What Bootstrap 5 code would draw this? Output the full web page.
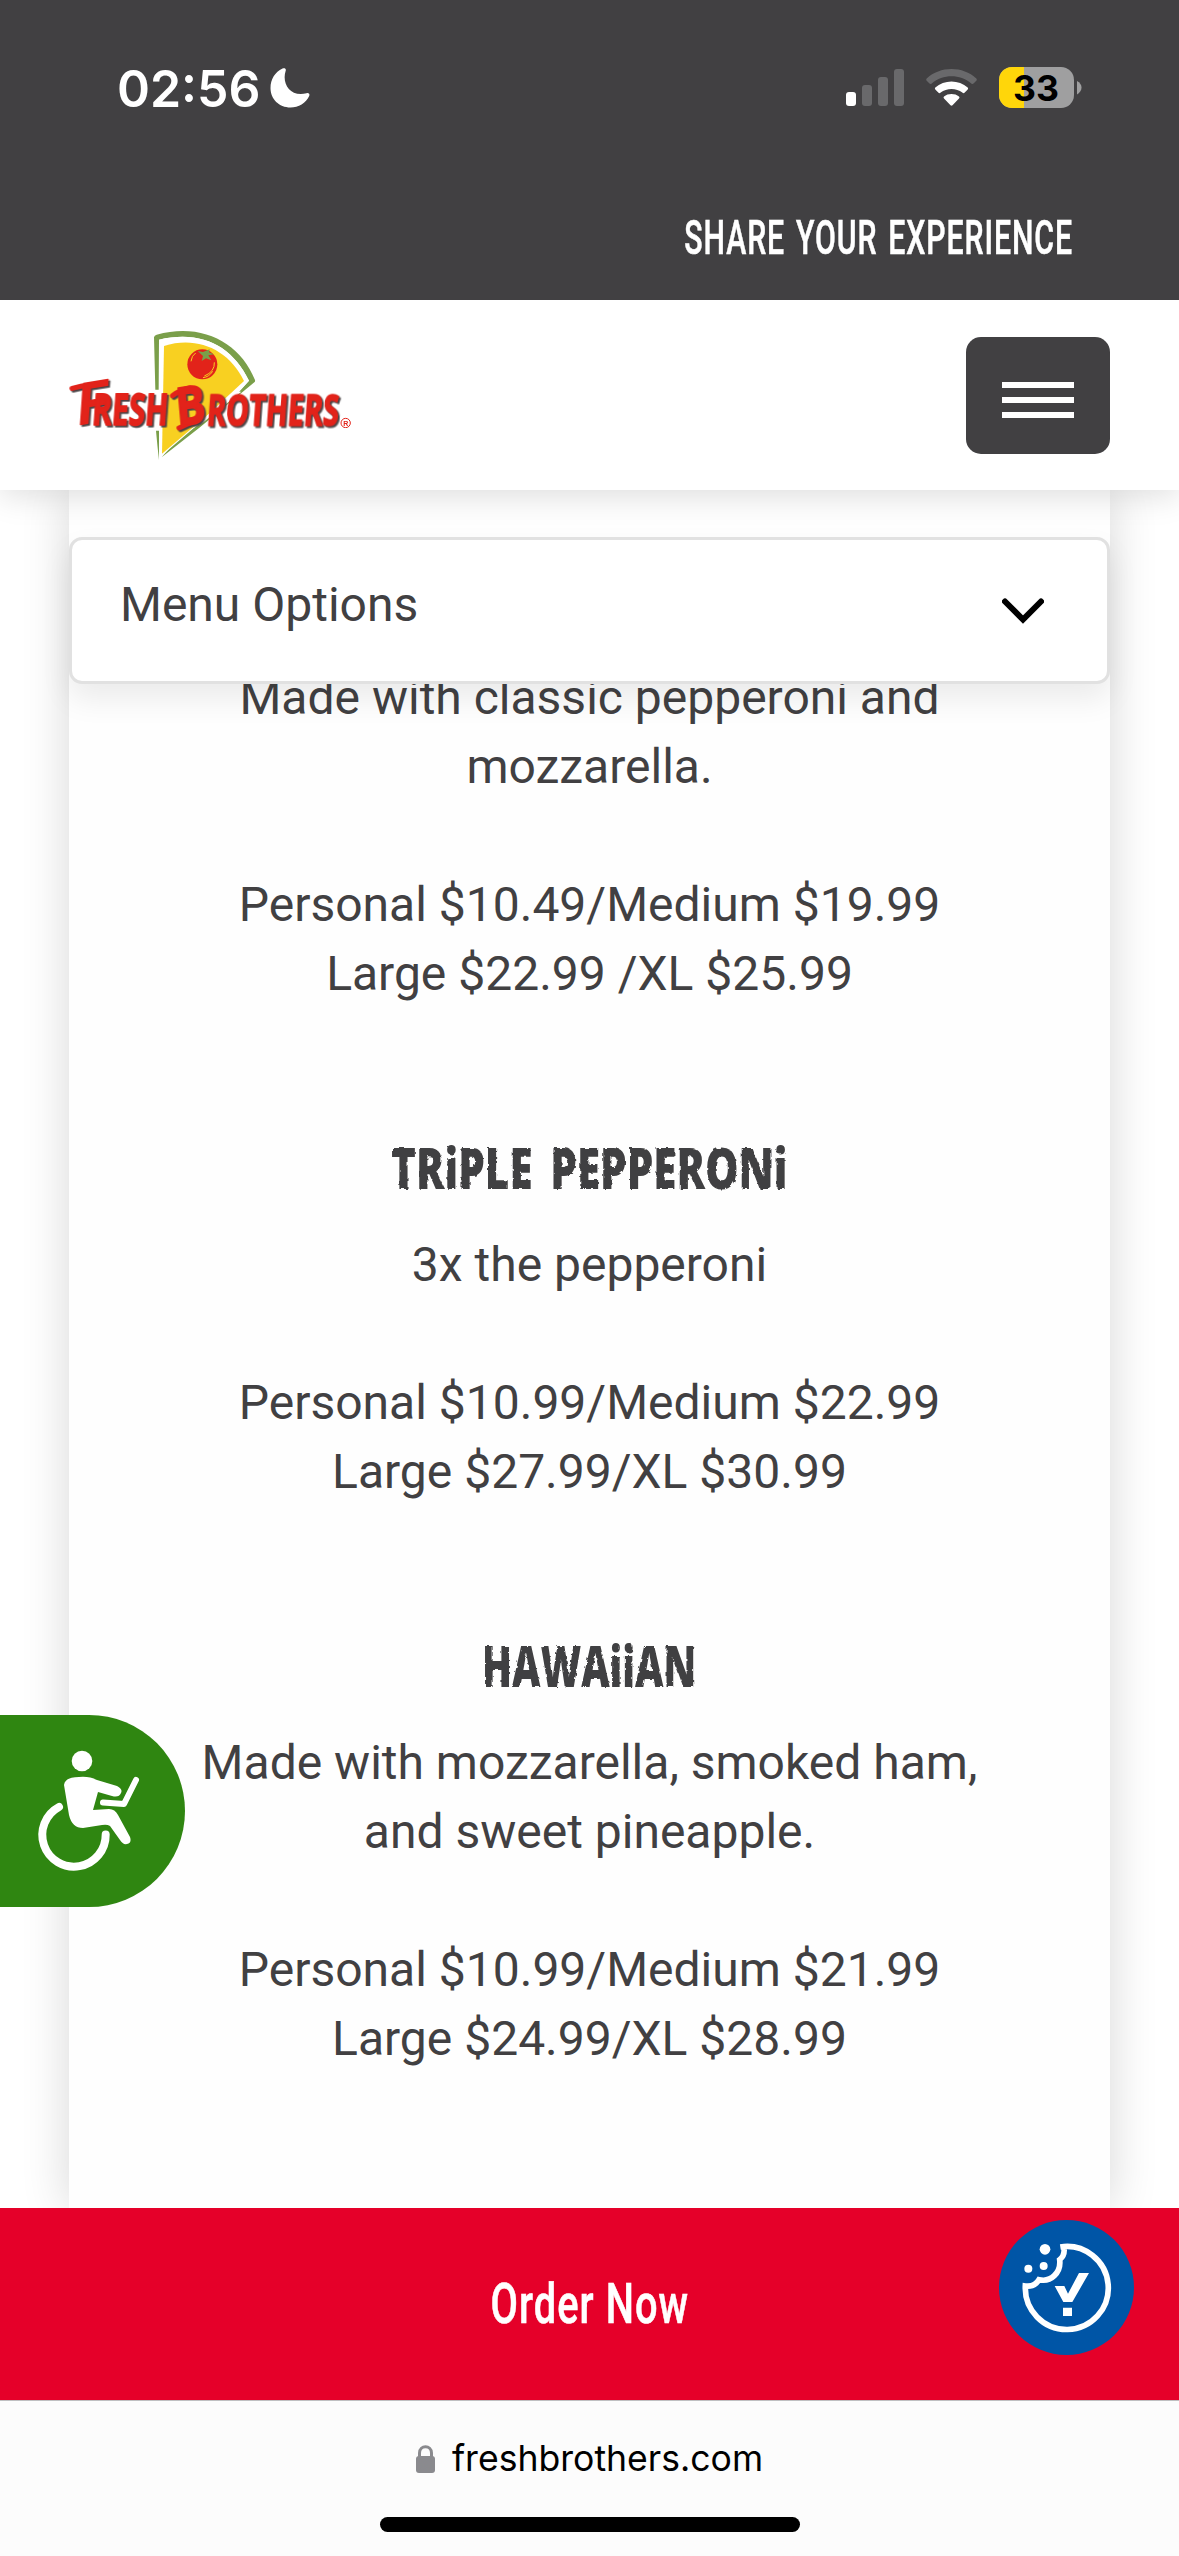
<!DOCTYPE html>
<html lang="en">
<head>
<meta charset="utf-8">
<meta name="viewport" content="width=device-width, initial-scale=1">
<title>Fresh Brothers</title>
<link href="https://cdn.jsdelivr.net/npm/bootstrap@5.3.0/dist/css/bootstrap.min.css" rel="stylesheet">
<style>
  :root { --ink: #414042; }
  body { font-family: Roboto, sans-serif; color: var(--ink); background: #fff; font-size: 48px; line-height: 69px; letter-spacing: 0; }
  svg { display: block; flex: none; }
  .screen { height: 2556px; }
  .topbar { height: 300px; background: var(--ink); z-index: 4; }
  .statusbar { height: 176px; padding: 0 97px 0 117px; }
  .clock { font: 600 51px/1 Inter, sans-serif; transform: scaleX(.98); transform-origin: 0 50%; }
  .promo { padding-right: 106px; height: 122px; }
  .slim { display: inline-block; white-space: nowrap; font-weight: 500; letter-spacing: 1.500px; -webkit-text-stroke: .6px #fff; }
  .slim-promo { font-size: 49px; transform: scaleX(.617); transform-origin: 100% 50%; word-spacing: 4px; }
  .slim-order { font-size: 56px; transform: scaleX(.71); }
  .sitebar { height: 190px; padding: 0 69px; z-index: 3; box-shadow: 0 6px 30px rgba(0,0,0,.13); }
  .burger { width: 144px; height: 117px; border-radius: 15px; background: var(--ink); gap: 9px; padding-top: 9px; margin-top: 1px; }
  .burger span { width: 72px; height: 6px; background: #fff; }
  .stage { padding: 0 69px; z-index: 1; }
  .sheet { background: #fefefe; box-shadow: 0 0 45px rgba(0,0,0,.16); padding: 173px 0 0; }
  .picker { top: 47px; left: 69px; right: 69px; height: 147px; border: 3px solid #e1e1e1; border-radius: 13px; box-shadow: 0 15px 30px rgba(0,0,0,.08); padding: 0 63px 12px 48px; z-index: 2; }
  .dish { margin-bottom: 124px; }
  .dish h3 { font: 800 56px/70px "Open Sans", sans-serif; margin: 0 0 28px; height: 70px; filter: url(#rough); color: var(--ink); word-spacing: 9px; }
  .dish h3 span { display: inline-block; transform: scaleX(.753); }
  .dish h3 .tight { transform: scaleX(.7); }
  .dish p { margin: 0 0 69px; }
  .dish p + p { margin: 0; }
  .orderbar { height: 192px; background: #e50029; z-index: 4; }
  .cookie { width: 135px; height: 135px; right: 45px; top: 12px; }
  .a11y { left: 0; top: 1715px; width: 185px; height: 192px; background: #2f8611; border-radius: 0 96px 96px 0; z-index: 5; }
  .urlbar { height: 156px; background: #fcfcfc; border-top: 1px solid #bfbfc1; z-index: 4; color: #000; padding-top: 31px; }
  .host { font: 400 35.600px/54px Inter, sans-serif; }
  .homebar { width: 420px; height: 15px; border-radius: 8px; background: #000; margin-top: 31px; }
  .wordmark { filter: drop-shadow(5px 5px 0 #4a4446); }
</style>
<script src="https://cdn.jsdelivr.net/npm/bootstrap@5.3.0/dist/js/bootstrap.bundle.min.js"></script>
</head>
<body>
<svg width="0" height="0" class="position-absolute" aria-hidden="true">
  <filter id="rough" x="0" y="0" width="1" height="1"><feTurbulence type="fractalNoise" baseFrequency=".2" numOctaves="2" seed="4"/><feDisplacementMap in="SourceGraphic" scale="3"/></filter>
</svg>
<div class="screen d-flex flex-column position-relative overflow-hidden">
  <header class="topbar flex-shrink-0 text-white position-relative">
    <div class="statusbar d-flex align-items-center justify-content-between">
      <div class="d-flex align-items-center">
        <span class="clock">02:56</span>
        <svg style="margin-left:7px" width="40" height="40" viewBox="0 0 40 40"><path fill="#fff" d="M12.500 .6C14.500-.4 16.400 .6 15.700 2.800C11.500 15 20 29.500 36.500 25.200C38.700 24.600 40 26 39.200 28C36 35 28.500 39.500 20.500 39.500C9 39.500 .5 31 .5 20C.5 11.500 5 4 12.500 .6Z"/></svg>
      </div>
      <svg width="236" height="42" viewBox="0 0 236 42">
        <rect x="0" y="25" width="10" height="14" rx="3" fill="#fff"/>
        <g fill="#69696b"><rect x="16" y="18" width="10" height="21" rx="3"/><rect x="32" y="10" width="10" height="29" rx="3"/><rect x="48" y="2" width="10" height="37" rx="3"/></g>
        <g transform="translate(80 2)">
          <path fill="#69696b" d="M.7 9.500C14-3.200 37-3.200 50.300 9.500Q51.300 10.700 50.300 11.700L47.500 14.600Q46.500 15.500 45.300 14.500C34 4.800 17 4.800 5.700 14.500Q4.500 15.500 3.500 14.600L.7 11.700Q-.3 10.700 .7 9.500Z"/>
          <path fill="#fff" d="M9.300 18.500C18 10.500 33 10.500 41.700 18.500Q42.600 19.500 41.700 20.500L38.500 23.700Q37.500 24.600 36.300 23.600C30.500 18.700 20.500 18.700 14.700 23.600Q13.500 24.600 12.500 23.700L9.300 20.500Q8.400 19.500 9.300 18.500ZM18 27.500C22 24.200 29 24.200 33 27.500Q34 28.500 33 29.600L26.500 36.300Q25.500 37.200 24.500 36.300L18 29.600Q17 28.500 18 27.500Z"/>
        </g>
        <clipPath id="batt"><rect x="153" y="0" width="75" height="41" rx="13"/></clipPath>
        <g clip-path="url(#batt)"><rect x="153" width="75" height="41" fill="#9f9fa0"/><rect x="153" width="25" height="41" fill="#ffd60a"/></g>
        <path fill="#9f9fa0" d="M231 14Q235.500 16.500 235.500 20.500T231 27.500Z"/>
        <text x="167" y="33.500" textLength="46" lengthAdjust="spacingAndGlyphs" font-family="Inter,sans-serif" font-weight="700" font-size="36" fill="#000">33</text>
      </svg>
    </div>
    <div class="promo d-flex align-items-center justify-content-end"><span class="slim slim-promo">SHARE YOUR EXPERIENCE</span></div>
  </header>

  <nav class="sitebar flex-shrink-0 bg-white position-relative d-flex align-items-center justify-content-between">
    <svg width="284" height="130" viewBox="87 88 852 390" role="img" aria-label="Fresh Brothers">
      <path fill="#7a9f4a" d="M342 110Q343 104 350 102C485 65 600 125 645 238Q646 242 643 245L480 380L365 470Q420 400 490 365L604 273H597L627 240C575 135 485 88 357 117L356 267H346ZM348 390H357V478Q352 435 348 390Z"/>
      <path fill="#fff" d="M357 117C485 88 575 135 627 240L597 273L480 366L366 464L357 478Z"/>
      <path fill="#f8d021" d="M372 136C470 105 565 145 612 241L500 345L366 459Z"/>
      <circle cx="487" cy="191" r="45" fill="#e2231a"/>
      <path fill="none" stroke="#f8d021" stroke-width="3" d="M523 185Q525 213 493 226M518 212Q507 229 489 231M453 182Q455 164 467 157"/>
      <path fill="#7a9f4a" d="M473 151L489 154L509 146L507 155L522 161L505 164L514 179L498 173L485 181L489 166Z"/>
      <g class="wordmark" font-family="'Open Sans',sans-serif" font-weight="700" fill="#e2231a" stroke="#e2231a" stroke-width="5" stroke-linejoin="round" stroke-linecap="round">
        <path fill="none" stroke-width="15" d="M96 263L126 256"/>
        <text transform="translate(105 374) skewY(-9) skewX(-4)" font-size="170" textLength="96" lengthAdjust="spacingAndGlyphs" font-weight="600">F</text>
        <text transform="translate(154 374) skewX(-4)" font-size="131" textLength="228" lengthAdjust="spacingAndGlyphs">RESH</text>
        <path fill="none" stroke-width="15" d="M397 285Q422 266 450 261M417 382L470 357"/>
        <text transform="translate(412 378) rotate(-9) skewX(-4)" font-size="160" textLength="90" lengthAdjust="spacingAndGlyphs">B</text>
        <text transform="translate(498 374) skewX(-4)" font-size="131" textLength="396" lengthAdjust="spacingAndGlyphs">ROTHERS</text>
      </g>
      <circle cx="917" cy="367" r="14" fill="#fff" stroke="#e2231a" stroke-width="3"/>
      <text x="910" y="375" font-family="'Liberation Sans',sans-serif" font-weight="700" font-size="21" fill="#e2231a">R</text>
    </svg>
    <button class="burger border-0 d-flex flex-column align-items-center justify-content-center" aria-label="Menu"><span></span><span></span><span></span></button>
  </nav>

  <main class="stage flex-grow-1 position-relative" style="min-height:0">
    <div class="picker position-absolute bg-white d-flex align-items-center justify-content-between">
      <span>Menu Options</span>
      <svg style="margin-top:12px" width="42" height="26" viewBox="0 0 42 26"><path d="M3 3.500L21 21.500L39 3.500" fill="none" stroke="#000" stroke-width="6" stroke-linecap="round"/></svg>
    </div>
    <div class="sheet h-100 text-center">
      <section class="dish">
        <p>Made with classic pepperoni and<br>mozzarella.</p>
        <p>Personal $10.49/Medium $19.99<br>Large $22.99 /XL $25.99</p>
      </section>
      <section class="dish">
        <h3><span>TRiPLE PEPPERONi</span></h3>
        <p>3x the pepperoni</p>
        <p>Personal $10.99/Medium $22.99<br>Large $27.99/XL $30.99</p>
      </section>
      <section class="dish">
        <h3><span class="tight">HAWAiiAN</span></h3>
        <p>Made with mozzarella, smoked ham,<br>and sweet pineapple.</p>
        <p>Personal $10.99/Medium $21.99<br>Large $24.99/XL $28.99</p>
      </section>
    </div>
  </main>

  <a class="orderbar flex-shrink-0 position-relative d-flex align-items-center justify-content-center text-white text-decoration-none" href="#">
    <span class="slim slim-order">Order Now</span>
    <svg class="cookie position-absolute" viewBox="0 0 405 405">
      <circle cx="202.500" cy="202.500" r="202.500" fill="#0055a6"/>
      <g fill="#fff"><circle cx="138" cy="88" r="16"/><circle cx="88" cy="146" r="12"/><circle cx="134" cy="138" r="12"/>
        <path d="M167 198H196L207 221L240 159H270L220 246H193ZM192 263H219V288H192Z"/></g>
      <path fill="none" stroke="#fff" stroke-width="17" d="M184 81A124.500 124.500 0 1 1 79 198Q107 202 120 179C155 188 187 158 182 119Q200 105 194 78"/>
    </svg>
  </a>

  <footer class="urlbar flex-shrink-0 position-relative d-flex flex-column align-items-center">
    <div class="d-flex align-items-center" style="gap:16px">
      <svg width="20" height="28" viewBox="0 0 20 28"><rect y="11" width="19" height="17" rx="3" fill="#8a8a8e"/><path d="M3.500 12V8C3.500-.3 15.500-.3 15.500 8V12" fill="none" stroke="#8a8a8e" stroke-width="3"/></svg>
      <span class="host">freshbrothers.com</span>
    </div>
    <div class="homebar"></div>
  </footer>

  <button class="a11y position-absolute border-0 p-0" aria-label="Accessibility">
    <svg width="185" height="192" viewBox="0 1715 185 192">
      <circle cx="82" cy="1761" r="10.300" fill="#fff"/>
      <path fill="#fff" d="M64 1785Q65 1777 79 1777Q89 1776 97 1780L117 1786Q123 1789 121 1793Q119 1798 112 1796L98 1792L93 1810L109 1809Q115 1809 118 1815L130 1837Q132 1843 127 1844Q123 1845 120 1840L110 1826Q107 1824 102 1825L83 1828Q72 1828 69 1815Z"/>
      <g fill="none" stroke="#fff" stroke-linecap="round" stroke-linejoin="round"><path stroke-width="6" d="M103 1802.500L124 1804L136 1780"/><path stroke-width="8" d="M59 1807A31.700 31.700 0 1 0 105.700 1834.500"/></g>
    </svg>
  </button>
</div>
</body>
</html>
